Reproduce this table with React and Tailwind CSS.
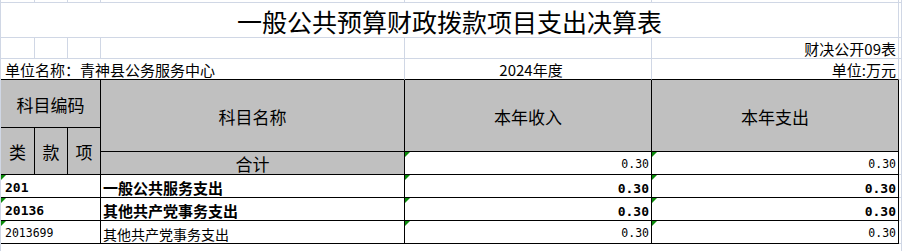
import React from "react";

const light = "border-[#d0d7e5]";
const cjk = "font-['Noto_Sans_CJK_SC',sans-serif]";
const mono = "font-['DejaVu_Sans_Mono',monospace]";

function Mark() {
  return (
    <span className="absolute top-0 left-0 w-0 h-0 border-t-[5px] border-r-[5px] border-t-[#0a8a0a] border-r-transparent" />
  );
}

const rows = [
  { code: "201", name: "一般公共服务支出", income: "0.30", spend: "0.30", bold: true, row: "row-start-8" },
  { code: "20136", name: "其他共产党事务支出", income: "0.30", spend: "0.30", bold: true, row: "row-start-9" },
  { code: "2013699", name: "其他共产党事务支出", income: "0.30", spend: "0.30", bold: false, row: "row-start-10" },
];

export default function App() {
  return (
    <div
      className={`grid w-[904px] h-[251px] bg-white text-black border-l ${light} ${cjk} grid-cols-[34px_33px_33px_304px_247px_247px_3px_1fr] grid-rows-[3px_35px_21px_21px_48px_24px_23px_23px_23px_23px_1fr]`}
    >
      {/* top partial row */}
      <div className={`row-start-1 col-start-1 border-r border-b ${light}`} />
      <div className={`row-start-1 col-start-2 border-r border-b ${light}`} />
      <div className={`row-start-1 col-start-3 border-r border-b ${light}`} />
      <div className={`row-start-1 col-start-4 border-r border-b ${light}`} />
      <div className={`row-start-1 col-start-5 border-r border-b ${light}`} />
      <div className={`row-start-1 col-start-6 border-r border-b ${light}`} />
      <div className={`row-start-1 col-start-7 border-r border-b ${light}`} />

      {/* title */}
      <div className={`row-start-2 col-start-1 col-span-6 border-r border-b ${light} flex items-center justify-center pt-[3px] text-[25px] leading-none`}>
        一般公共预算财政拨款项目支出决算表
      </div>
      <div className={`row-start-2 col-start-7 border-r border-b ${light}`} />

      {/* row 3 */}
      <div className={`row-start-3 col-start-1 border-r border-b ${light}`} />
      <div className={`row-start-3 col-start-2 border-r border-b ${light}`} />
      <div className={`row-start-3 col-start-3 border-r border-b ${light}`} />
      <div className={`row-start-3 col-start-4 border-r border-b ${light}`} />
      <div className={`row-start-3 col-start-5 border-r border-b ${light}`} />
      <div className={`row-start-3 col-start-6 border-r border-b ${light} flex items-center justify-end pr-[2px] pt-[1px] text-[15px] leading-none`}>
        财决公开09表
      </div>
      <div className={`row-start-3 col-start-7 border-r border-b ${light}`} />

      {/* row 4 */}
      <div className={`row-start-4 col-start-1 col-span-4 border-r ${light} border-b border-b-black flex items-center pl-[4px] text-[15px] leading-none`}>
        单位名称：青神县公务服务中心
      </div>
      <div className={`row-start-4 col-start-5 border-r ${light} border-b border-b-black flex items-center justify-center pl-[6px] text-[15px] leading-none`}>
        2024年度
      </div>
      <div className={`row-start-4 col-start-6 border-r ${light} border-b border-b-black flex items-center justify-end pr-[2px] text-[15px] leading-none`}>
        单位:万元
      </div>
      <div className={`row-start-4 col-start-7 border-r border-b ${light}`} />

      {/* header */}
      <div className="row-start-5 col-start-1 col-span-3 bg-[#c0c0c0] border-r border-b border-black flex items-center justify-center pt-[1px] text-[17px] leading-none">
        科目编码
      </div>
      <div className="row-start-6 row-span-2 col-start-1 bg-[#c0c0c0] border-r border-b border-black flex items-center justify-center pt-[1px] text-[17px] leading-none">
        类
      </div>
      <div className="row-start-6 row-span-2 col-start-2 bg-[#c0c0c0] border-r border-b border-black flex items-center justify-center pt-[1px] text-[17px] leading-none">
        款
      </div>
      <div className="row-start-6 row-span-2 col-start-3 bg-[#c0c0c0] border-r border-b border-black flex items-center justify-center pt-[1px] text-[17px] leading-none">
        项
      </div>
      <div className="row-start-5 row-span-2 col-start-4 bg-[#c0c0c0] border-r border-b border-black flex items-center justify-center pt-[1px] text-[17px] leading-none">
        科目名称
      </div>
      <div className="row-start-5 row-span-2 col-start-5 bg-[#c0c0c0] border-r border-b border-black flex items-center justify-center pt-[1px] text-[17px] leading-none">
        本年收入
      </div>
      <div className="row-start-5 row-span-2 col-start-6 bg-[#c0c0c0] border-r border-b border-black flex items-center justify-center pt-[1px] text-[17px] leading-none">
        本年支出
      </div>
      <div className={`row-start-5 row-span-3 col-start-7 border-r border-b ${light}`} />

      {/* total row */}
      <div className="row-start-7 col-start-4 bg-[#c0c0c0] border-r border-b border-black flex items-center justify-center text-[17px] leading-none">
        合计
      </div>
      <div className={`row-start-7 col-start-5 relative border-r border-b border-black flex items-center justify-end pr-[2px] pt-[4px] ${mono} text-[11.5px] leading-none`}>
        <Mark />
        0.30
      </div>
      <div className={`row-start-7 col-start-6 relative border-r border-b border-black flex items-center justify-end pr-[2px] pt-[4px] ${mono} text-[11.5px] leading-none`}>
        <Mark />
        0.30
      </div>

      {/* data rows */}
      {rows.map((r) => (
        <React.Fragment key={r.code}>
          <div
            className={`${r.row} col-start-1 col-span-3 relative border-r border-b border-black flex items-center pl-[4px] pt-[3px] ${mono} leading-none ${
              r.bold ? "font-bold text-[13px]" : "text-[11.5px]"
            }`}
          >
            <Mark />
            {r.code}
          </div>
          <div
            className={`${r.row} col-start-4 border-r border-b border-black flex items-center pl-[2px] pt-[3px] leading-none ${
              r.bold ? "font-bold text-[15px]" : "text-[14px]"
            }`}
          >
            {r.name}
          </div>
          <div
            className={`${r.row} col-start-5 relative border-r border-b border-black flex items-center justify-end pr-[2px] pt-[4px] ${mono} leading-none ${
              r.bold ? "font-bold text-[13px]" : "text-[11.5px]"
            }`}
          >
            <Mark />
            {r.income}
          </div>
          <div
            className={`${r.row} col-start-6 relative border-r border-b border-black flex items-center justify-end pr-[2px] pt-[4px] ${mono} leading-none ${
              r.bold ? "font-bold text-[13px]" : "text-[11.5px]"
            }`}
          >
            <Mark />
            {r.spend}
          </div>
          <div className={`${r.row} col-start-7 border-r border-b ${light}`} />
        </React.Fragment>
      ))}

      {/* bottom blank row */}
      <div className={`row-start-11 col-start-7 border-r ${light}`} />
    </div>
  );
}
